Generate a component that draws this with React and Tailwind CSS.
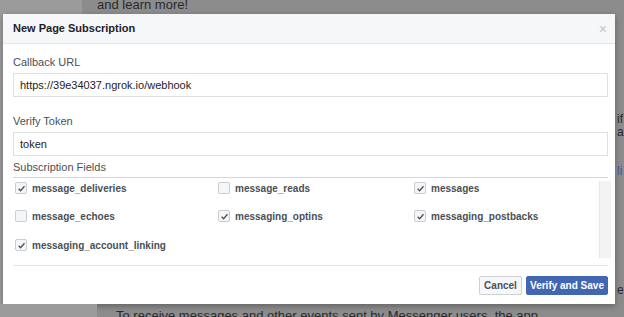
import { useState } from "react";

const FIELDS = [
  { name: "message_deliveries", checked: true },
  { name: "message_reads", checked: false },
  { name: "messages", checked: true },
  { name: "message_echoes", checked: false },
  { name: "messaging_optins", checked: true },
  { name: "messaging_postbacks", checked: true },
  { name: "messaging_account_linking", checked: true },
];

function Check({ checked }) {
  return (
    <span className="w-[12px] h-[12px] border border-[#c9ccd1] rounded-[2px] bg-[#f5f6f7] flex items-center justify-center shrink-0">
      {checked && (
        <svg width="9" height="9" viewBox="0 0 9 9">
          <path d="M1.6 4.8 L3.6 6.7 L7.5 2.3" stroke="#4b4f56" strokeWidth="1.3" fill="none" />
        </svg>
      )}
    </span>
  );
}

function App() {
  const [fields, setFields] = useState(FIELDS);

  const toggle = (i) =>
    setFields((prev) => prev.map((f, j) => (j === i ? { ...f, checked: !f.checked } : f)));

  return (
    <div
      className="w-[624px] h-[317px] overflow-hidden flex flex-col bg-[#8c8c8c]"
      style={{ fontFamily: '"Liberation Sans", Arial, sans-serif' }}
    >
      {/* backdrop top */}
      <div className="h-[14px] flex shrink-0">
        <div className="w-[82px] bg-[#9b9b9b]" />
        <div className="flex-1 pl-[15px] text-[13px] leading-[10px] text-[#2a2a2a] overflow-hidden whitespace-nowrap">
          and learn more!
        </div>
      </div>

      <div className="flex h-[290px] shrink-0">
        <div className="w-[3px] bg-[#9b9b9b]" />
        {/* Modal */}
        <div className="w-[612px] bg-white flex flex-col shadow-[0_2px_6px_rgba(0,0,0,0.3)]">
          <div className="h-[30px] bg-[#f6f7f9] border-b border-[#e5e5e5] flex items-center justify-between pl-[10px] pr-[8px]">
            <span className="text-[11px] font-bold text-[#1d2129]">New Page Subscription</span>
            <span className="text-[14px] text-[#bec2c9] leading-none">×</span>
          </div>

          <div className="flex flex-col pl-[10px]">
            <label className="text-[11px] text-[#4b4f56] mt-[12px] mb-[4px] leading-[13px]">Callback URL</label>
            <div className="h-[24px] w-[595px] border border-[#dddfe2] flex items-center px-[6px] text-[11px] text-[#1d2129]">
              https://39e34037.ngrok.io/webhook
            </div>
            <label className="text-[11px] text-[#4b4f56] mt-[18px] mb-[4px] leading-[13px]">Verify Token</label>
            <div className="h-[24px] w-[595px] border border-[#dddfe2] flex items-center px-[6px] text-[11px] text-[#1d2129]">
              token
            </div>
            <div className="text-[11px] text-[#4b4f56] mt-[5px] leading-[13px] pb-[3px] border-b border-[#d3d6db] w-[595px]">
              Subscription Fields
            </div>

            <div className="flex w-[598px] items-start">
              <div className="flex-1 grid grid-cols-[203px_196px_1fr] grid-rows-[28px_29px_28px]">
                {fields.map((f, i) => (
                  <button
                    key={f.name}
                    type="button"
                    onClick={() => toggle(i)}
                    className="flex items-center gap-[5px] pl-[2px] h-[20px] self-start text-[10px] font-bold text-[#4b4f56] whitespace-nowrap"
                  >
                    <Check checked={f.checked} />
                    {f.name}
                  </button>
                ))}
              </div>
              <div className="w-[12px] h-[77px] mt-[3px] bg-[#f3f3f3] border-l border-[#e6e6e6]" />
            </div>

            <div className="w-[595px] border-b border-[#e5e5e5] mt-[2px]" />

            <div className="flex justify-end gap-[4px] w-[595px] mt-[10px]">
              <button className="h-[19px] w-[43px] text-[10px] font-bold text-[#4b4f56] bg-[#f6f7f9] border border-[#ced0d4] rounded-[2px] whitespace-nowrap">
                Cancel
              </button>
              <button className="h-[19px] w-[82px] text-[10px] font-bold text-white bg-[#4267b2] border border-[#4267b2] rounded-[2px] whitespace-nowrap">
                Verify and Save
              </button>
            </div>
          </div>
        </div>
        <div className="flex-1 flex flex-col text-[12px] text-[#2a2a2a] overflow-hidden pt-[99px] leading-[13px] pl-[2px]">
          <span>if</span>
          <span>a</span>
          <span className="mt-[26px] text-[#3b5998]">li</span>
          <span className="mt-[106px]">et</span>
        </div>
      </div>

      {/* backdrop bottom */}
      <div className="flex-1 flex">
        <div className="w-[97px] bg-[#9b9b9b]" />
        <div className="flex-1 pl-[19px] pt-[2px] text-[13px] text-[#2a2a2a] whitespace-nowrap overflow-hidden">
          To receive messages and other events sent by Messenger users, the app
        </div>
      </div>
    </div>
  );
}

export default App;
